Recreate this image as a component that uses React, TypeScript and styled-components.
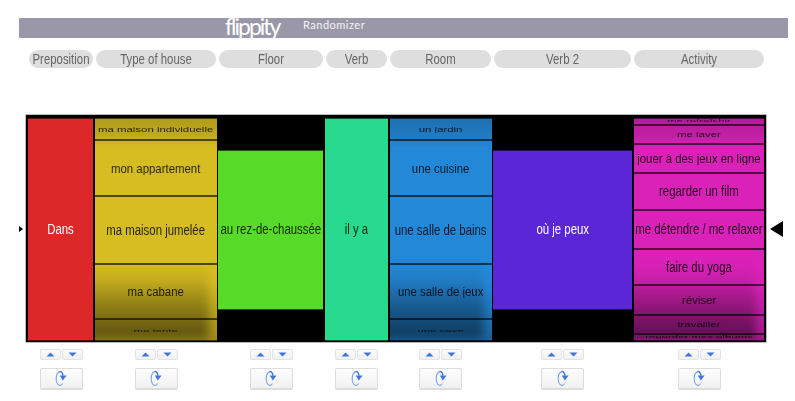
import styled, {createGlobalStyle} from 'styled-components'

const GlobalStyle = createGlobalStyle`
    body {
        margin: 0;
        background: #ffffff;
        font-family: "Liberation Sans", sans-serif;
    }
`

const Page = styled.div`
    width: 795px;
    height: 401px;
    overflow: hidden;
`
const TopBar = styled.div`
    display: flex;
    align-items: center;
    width: 769px;
    height: 20px;
    margin: 18px 0 0 19px;
    padding-left: 206px;
    box-sizing: border-box;
    background: #9a98a8;
    overflow: hidden;
    color: #f4f4f6;
`
const Logo = styled.span`
    font-family: "Lato", sans-serif;
    font-size: 23px;
    line-height: 20px;
    letter-spacing: -2px;
    width: 78px;
    margin-top: -5px;
    color: #ffffff;
`
const Product = styled.span`
    font-family: "Lato", sans-serif;
    font-size: 11px;
    letter-spacing: 0.5px;
    margin-top: -7px;
`
const Pills = styled.div`
    display: flex;
    gap: 3px;
    margin: 12px 0 0 29px;
`
const Pill = styled.div<{$w: number}>`
    width: ${p => p.$w}px;
    height: 18px;
    line-height: 18px;
    border-radius: 9px;
    background: #dedede;
    color: #666666;
    font-size: 11.4px;
    text-align: center;
`
const Stage = styled.div`
    display: flex;
    align-items: center;
    margin: 47px 0 0 19px;
`
const Frame = styled.div`
    display: flex;
    gap: 1.67px;
    width: 740px;
    height: 227px;
    box-sizing: border-box;
    margin: 0 4px 0 3px;
    padding: 3px 2px 1px;
    background: #000000;
    box-shadow: 0 0 0 0.5px #777777;
`
const Reel = styled.div<{$w: number}>`
    position: relative;
    display: flex;
    flex-direction: column;
    justify-content: center;
    width: ${p => p.$w}px;
    height: 223px;
    overflow: hidden;
`
const Item = styled.div<{$h: number; $bg: string; $light?: boolean}>`
    flex: none;
    display: flex;
    align-items: center;
    justify-content: center;
    height: ${p => p.$h}px;
    box-sizing: border-box;
    padding-bottom: 1px;
    border: 1px solid rgba(0, 0, 0, 0.62);
    border-width: 1px 0;
    background: ${p => p.$bg};
    color: ${p => (p.$light ? '#ffffff' : 'rgba(0, 0, 0, 0.82)')};
    font-size: 11.4px;
    white-space: nowrap;
`
// narrow face is not installed: a small font stretched upwards reads the same, and squash gives the drum look
const Label = styled.span<{$squash: number}>`
    display: inline-block;
    transform: scaleY(${p => 1.25 * p.$squash});
`
const TopShade = styled.div`
    position: absolute;
    top: 0;
    left: 0;
    right: 0;
    height: 30px;
    background: linear-gradient(rgba(0, 0, 0, 0.18), rgba(0, 0, 0, 0.1) 60%, rgba(0, 0, 0, 0));
    pointer-events: none;
`
const BottomShade = styled.div`
    position: absolute;
    bottom: 2px;
    left: -12px;
    right: 8px;
    height: 74px;
    background: linear-gradient(rgba(0, 0, 0, 0), rgba(0, 0, 0, 0.22) 50%, rgba(0, 0, 0, 0.44));
    filter: blur(5px);
    pointer-events: none;
`
const EdgeShade = styled.div`
    position: absolute;
    bottom: 0;
    left: 0;
    right: 0;
    height: 60px;
    background: linear-gradient(rgba(0, 0, 0, 0), rgba(0, 0, 0, 0.26));
    pointer-events: none;
`
const Controls = styled.div`
    display: flex;
    gap: 3px;
    margin: 7px 0 0 29px;
`
const Control = styled.div<{$w: number}>`
    display: flex;
    flex-direction: column;
    align-items: center;
    gap: 8px;
    width: ${p => p.$w}px;
`
const Steps = styled.div`
    display: flex;
    gap: 1px;
`
const Step = styled.button`
    display: flex;
    align-items: center;
    justify-content: center;
    width: 21px;
    height: 11px;
    padding: 0;
    border: 1px solid #e2e2e2;
    border-radius: 2px;
    background: linear-gradient(#fbfbfb, #f0f0f0);
`
const Spin = styled.button`
    display: flex;
    align-items: center;
    justify-content: center;
    width: 43px;
    height: 22px;
    padding: 0;
    border: 1px solid #dddddd;
    border-bottom-width: 2px;
    border-radius: 2px;
    background: linear-gradient(#fdfdfd, #f1f1f1);
`

const Triangle = ({dir, w, h}: {dir: 'left' | 'right'; w: number; h: number}) => (
    <svg width={w} height={h} viewBox="0 0 10 10" preserveAspectRatio="none">
        <polygon points={dir === 'left' ? '10,0 10,10 0,5' : '0,0 0,10 10,5'} fill="#000000" />
    </svg>
)

const Caret = ({up}: {up?: boolean}) => (
    <svg width="9" height="5" viewBox="0 0 9 5">
        <polygon points={up ? '4.5,0.5 8.5,4.5 0.5,4.5' : '0.5,0.5 8.5,0.5 4.5,4.5'} fill="#3f74da" />
    </svg>
)

const SpinIcon = () => (
    <svg width="12" height="17" viewBox="0 0 12 17" fill="none">
        <path d="M7.4 13.4 C6.8 15 5.6 15.6 4.4 15.3 C2.2 14.6 1.2 11.6 1.2 8.6 C1.2 4.6 2.8 1.6 5.4 1.6" stroke="#7fa2e6" strokeWidth="1.1" />
        <path d="M4.6 1.4 C6.4 1.5 7.6 2.8 8 5.6" stroke="#3f74da" strokeWidth="1.4" />
        <polygon points="4.8,5.4 11.6,5.6 7.8,10.6" fill="#3f74da" />
    </svg>
)

type Entry = {text: string; h: number; squash: number}

const yellow = '#d6bd22'
const blue = '#2488d8'
const pink = '#da22b8'

const fiveRows = (a: string, b: string, c: string, d: string, e: string): Entry[] => [
    {text: a, h: 22, squash: 0.5},
    {text: b, h: 56, squash: 0.9},
    {text: c, h: 68, squash: 1},
    {text: d, h: 55, squash: 0.9},
    {text: e, h: 22, squash: 0.3},
]

const columns: {
    title: string
    pill: number
    reel: number
    bg: string
    light?: boolean
    shaded?: boolean
    entries: Entry[]
}[] = [
    {title: 'Preposition', pill: 64, reel: 65, bg: '#dc2828', light: true, entries: [{text: 'Dans', h: 223, squash: 1}]},
    {
        title: 'Type of house',
        pill: 120,
        reel: 122,
        bg: yellow,
        shaded: true,
        entries: fiveRows('ma maison individuelle', 'mon appartement', 'ma maison jumelée', 'ma cabane', 'ma tente'),
    },
    {title: 'Floor', pill: 104, reel: 105, bg: '#58da28', entries: [{text: 'au rez-de-chaussée', h: 160, squash: 1}]},
    {title: 'Verb', pill: 61, reel: 63, bg: '#28da8e', entries: [{text: 'il y a', h: 223, squash: 1}]},
    {
        title: 'Room',
        pill: 101,
        reel: 102,
        bg: blue,
        shaded: true,
        entries: fiveRows('un jardin', 'une cuisine', 'une salle de bains', 'une salle de jeux', 'une cave'),
    },
    {title: 'Verb 2', pill: 137, reel: 139, bg: '#5a26d6', light: true, entries: [{text: 'où je peux', h: 160, squash: 1}]},
    {
        title: 'Activity',
        pill: 130,
        reel: 130,
        bg: pink,
        shaded: true,
        entries: [
            {text: 'me rafraîchir', h: 7, squash: 0.2},
            {text: 'me laver', h: 19, squash: 0.55},
            {text: 'jouer à des jeux en ligne', h: 29, squash: 0.9},
            {text: 'regarder un film', h: 37, squash: 1},
            {text: 'me détendre / me relaxer', h: 39, squash: 1},
            {text: 'faire du yoga', h: 36, squash: 1},
            {text: 'réviser', h: 30, squash: 0.8},
            {text: 'travailler', h: 19, squash: 0.55},
            {text: 'regarder mes albums', h: 7, squash: 0.2},
        ],
    },
]

function App() {
    return (
        <Page>
            <GlobalStyle />
            <TopBar>
                <Logo>flippity</Logo>
                <Product>Randomizer</Product>
            </TopBar>
            <Pills>
                {columns.map(c => (
                    <Pill key={c.title} $w={c.pill}>
                        <Label $squash={1}>{c.title}</Label>
                    </Pill>
                ))}
            </Pills>
            <Stage>
                <Triangle dir="right" w={4} h={6} />
                <Frame>
                    {columns.map(c => (
                        <Reel key={c.title} $w={c.reel}>
                            {c.entries.map(e => (
                                <Item key={e.text} $h={e.h} $bg={c.bg} $light={c.light}>
                                    <Label $squash={e.squash}>{e.text}</Label>
                                </Item>
                            ))}
                            {c.shaded ? <TopShade /> : null}
                            {c.shaded ? <BottomShade /> : null}
                            {c.shaded ? <EdgeShade /> : null}
                        </Reel>
                    ))}
                </Frame>
                <Triangle dir="left" w={13} h={16} />
            </Stage>
            <Controls>
                {columns.map(c => (
                    <Control key={c.title} $w={c.pill}>
                        <Steps>
                            <Step>
                                <Caret up />
                            </Step>
                            <Step>
                                <Caret />
                            </Step>
                        </Steps>
                        <Spin>
                            <SpinIcon />
                        </Spin>
                    </Control>
                ))}
            </Controls>
        </Page>
    )
}

export default App
